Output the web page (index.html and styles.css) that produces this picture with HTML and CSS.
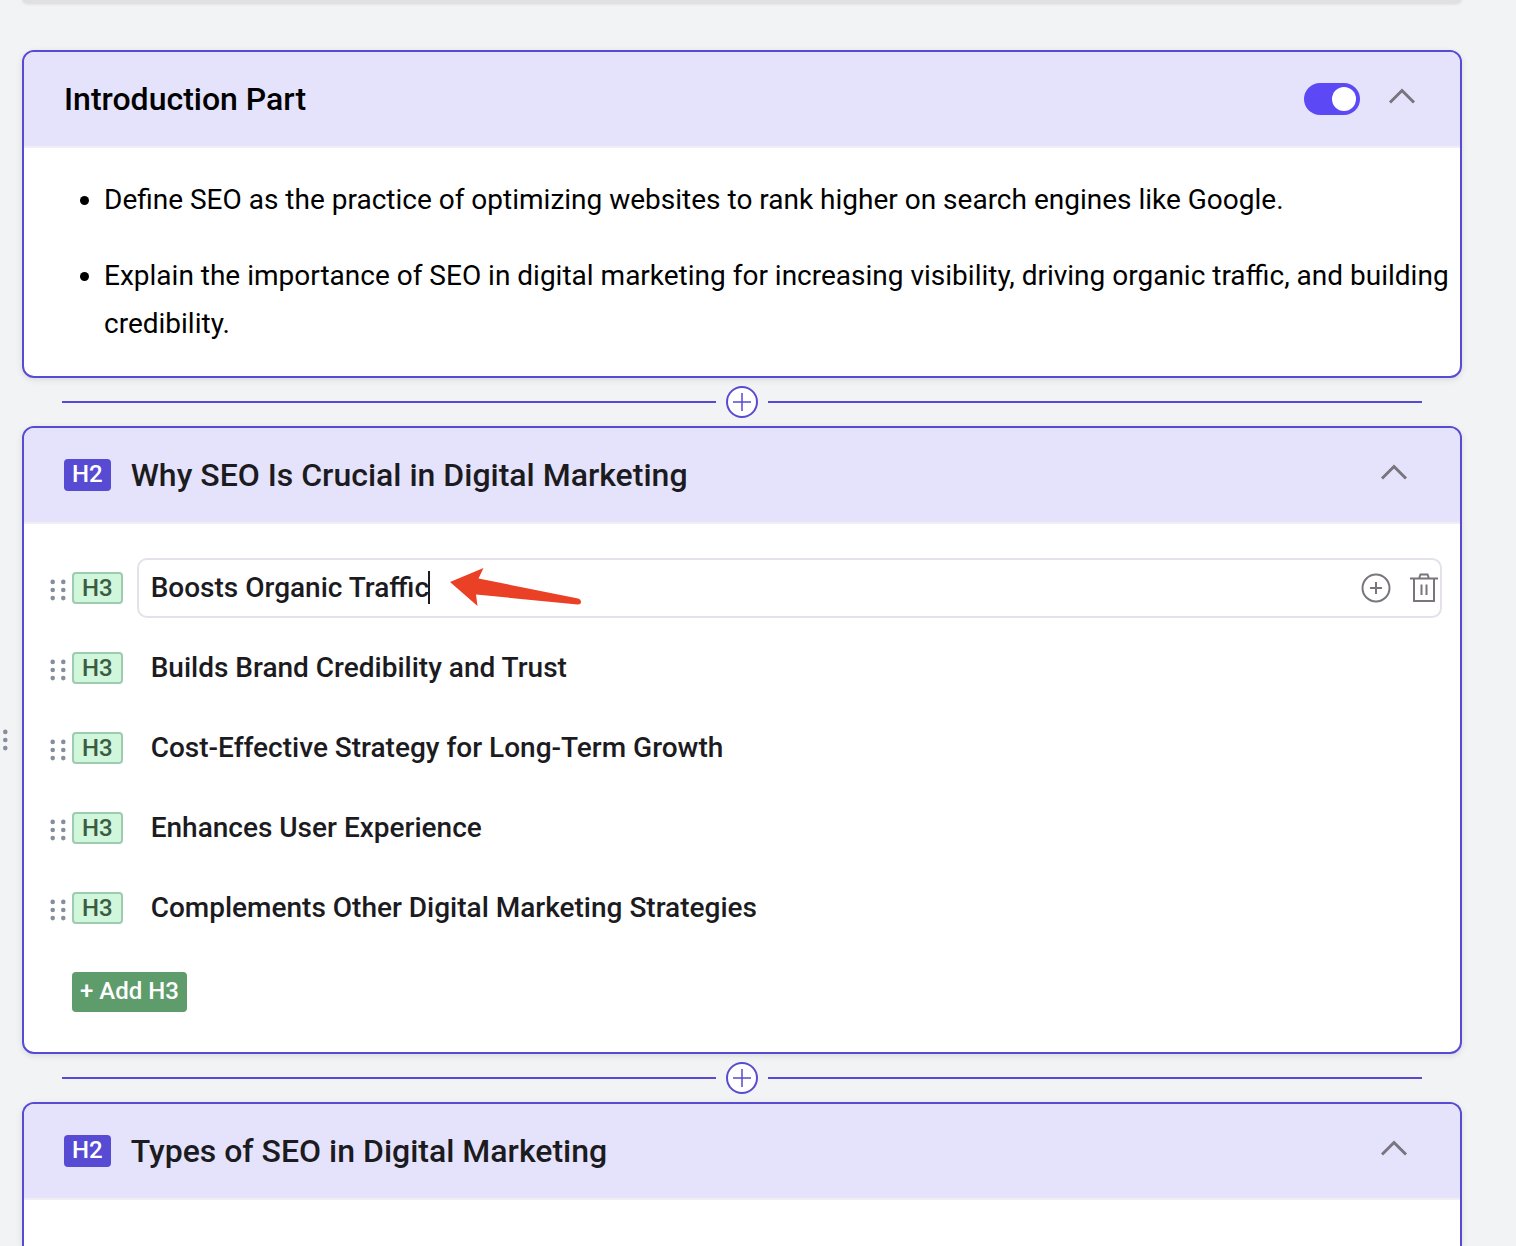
FILE: index.html
```html
<!DOCTYPE html>
<html lang="en">
<head>
<meta charset="utf-8">
<meta name="viewport" content="width=device-width, initial-scale=1">
<title>Outline editor</title>
<link rel="stylesheet" href="styles.css">
</head>
<body>
<svg class="sprite" aria-hidden="true">
  <symbol id="chevron" viewBox="0 0 28 18"><path d="M2 15.500 14 3.500 26 15.500" fill="none" stroke="currentColor" stroke-width="3"/></symbol>
  <symbol id="drag" viewBox="0 0 16 22"><g fill="currentColor"><circle cx="2.700" cy="2.900" r="2.300"/><circle cx="13.300" cy="2.900" r="2.300"/><circle cx="2.700" cy="11" r="2.300"/><circle cx="13.300" cy="11" r="2.300"/><circle cx="2.700" cy="19.100" r="2.300"/><circle cx="13.300" cy="19.100" r="2.300"/></g></symbol>
  <symbol id="insert" viewBox="0 0 32 32"><circle cx="16" cy="16" r="15" fill="#fff" stroke="currentColor" stroke-width="2"/><path d="M7 16H25M16 7V25" stroke="currentColor" stroke-width="1.500"/></symbol>
  <symbol id="plus-circle" viewBox="0 0 30 30"><circle cx="15" cy="15" r="13.500" fill="none" stroke="currentColor" stroke-width="2"/><path d="M9 15H21M15 9V21" stroke="currentColor" stroke-width="2"/></symbol>
  <symbol id="trash" viewBox="0 0 28 30"><path d="M0 5.500H28M4 5.500V28H24V5.500M9 5.500 10.500 1.500H17.500L19 5.500M11.500 11.500V22M16.500 11.500V22" fill="none" stroke="currentColor" stroke-width="2"/></symbol>
</svg>

<main class="outline">
  <div class="previous-card"></div>

  <section class="card">
    <header class="card-header">
      <h2 class="card-title intro-title">Introduction Part</h2>
      <input class="toggle" type="checkbox" role="switch" aria-label="Include introduction" checked>
      <button class="icon-button collapse" aria-label="Collapse"><svg class="chevron"><use href="#chevron"/></svg></button>
    </header>
    <ul class="points">
      <li>Define SEO as the practice of optimizing websites to rank higher on search engines like Google.</li>
      <li>Explain the importance of SEO in digital marketing for increasing visibility, driving organic traffic, and building credibility.</li>
    </ul>
  </section>

  <div class="divider"><button class="icon-button" aria-label="Insert section"><svg class="insert"><use href="#insert"/></svg></button></div>

  <section class="card">
    <button class="icon-button card-handle" aria-label="Move section"><svg class="drag"><use href="#drag"/></svg></button>
    <header class="card-header section-header">
      <span class="tag-h2">H2</span>
      <h2 class="card-title">Why SEO Is Crucial in Digital Marketing</h2>
      <button class="icon-button collapse" aria-label="Collapse"><svg class="chevron"><use href="#chevron"/></svg></button>
    </header>
    <div class="card-body">
      <div class="rows">
        <div class="row">
          <button class="icon-button" aria-label="Move heading"><svg class="drag"><use href="#drag"/></svg></button>
          <span class="tag-h3">H3</span>
          <div class="field editing">
            <input class="heading-input" type="text" aria-label="H3 heading" value="Boosts Organic Traffic">
            <span class="caret"></span>
            <div class="actions">
              <button class="icon-button" aria-label="Add heading"><svg class="plus-circle"><use href="#plus-circle"/></svg></button>
              <button class="icon-button" aria-label="Delete heading"><svg class="trash"><use href="#trash"/></svg></button>
            </div>
            <svg class="arrow" viewBox="0 0 132 38" aria-hidden="true"><path d="M0 14 33.500 0 28.500 10.500 128 30.500Q131 31.500 131 34T127.500 36.500L26 26.500 27.500 38Z" fill="#ea4025"/></svg>
          </div>
        </div>
        <div class="row">
          <button class="icon-button" aria-label="Move heading"><svg class="drag"><use href="#drag"/></svg></button>
          <span class="tag-h3">H3</span>
          <div class="field"><input class="heading-input" type="text" aria-label="H3 heading" value="Builds Brand Credibility and Trust"></div>
        </div>
        <div class="row">
          <button class="icon-button" aria-label="Move heading"><svg class="drag"><use href="#drag"/></svg></button>
          <span class="tag-h3">H3</span>
          <div class="field"><input class="heading-input" type="text" aria-label="H3 heading" value="Cost-Effective Strategy for Long-Term Growth"></div>
        </div>
        <div class="row">
          <button class="icon-button" aria-label="Move heading"><svg class="drag"><use href="#drag"/></svg></button>
          <span class="tag-h3">H3</span>
          <div class="field"><input class="heading-input" type="text" aria-label="H3 heading" value="Enhances User Experience"></div>
        </div>
        <div class="row">
          <button class="icon-button" aria-label="Move heading"><svg class="drag"><use href="#drag"/></svg></button>
          <span class="tag-h3">H3</span>
          <div class="field"><input class="heading-input" type="text" aria-label="H3 heading" value="Complements Other Digital Marketing Strategies"></div>
        </div>
      </div>
      <button class="add-button">+ Add H3</button>
    </div>
  </section>

  <div class="divider"><button class="icon-button" aria-label="Insert section"><svg class="insert"><use href="#insert"/></svg></button></div>

  <section class="card card-open">
    <header class="card-header section-header">
      <span class="tag-h2">H2</span>
      <h2 class="card-title">Types of SEO in Digital Marketing</h2>
      <button class="icon-button collapse" aria-label="Collapse"><svg class="chevron"><use href="#chevron"/></svg></button>
    </header>
  </section>
</main>
</body>
</html>
```

FILE: styles.css
```css
* { box-sizing: border-box; }

body {
  margin: 0;
  background: #f1f3f5;
  color: #1c1b1f;
  font-family: Roboto, "Liberation Sans", sans-serif;
  font-size: 28px;
}

.sprite { position: absolute; width: 0; height: 0; }
svg { display: block; flex: none; }

.outline {
  display: flex;
  flex-direction: column;
  min-height: 100vh;
  padding: 0 54px 0 22px;
}

.previous-card {
  height: 3px;
  margin-bottom: 47px;
  border-radius: 0 0 8px 8px / 0 0 3px 3px;
  background: #e2dfe3;
  box-shadow: 0 1px 3px rgba(0, 0, 0, 0.12);
}

.card {
  position: relative;
  border: 2px solid #574bd3;
  border-radius: 12px;
  background: #fff;
  box-shadow: 0 2px 6px rgba(0, 0, 0, 0.1);
}

.card-open {
  flex: 1;
  border-bottom: 0;
  border-radius: 12px 12px 0 0;
}

.card-header {
  display: flex;
  align-items: center;
  height: 96px;
  padding: 0 44px 0 40px;
  border-bottom: 2px solid #f0edf4;
  border-radius: 10px 10px 0 0;
  background: #e5e3fb;
}

.section-header { padding-right: 52px; }

.card-title {
  flex: 1;
  margin: 0;
  font-size: 32px;
  font-weight: 500;
  line-height: 48px;
}

.intro-title { color: #000; }

.icon-button {
  display: block;
  flex: none;
  padding: 0;
  border: 0;
  background: none;
  color: #79747e;
}

.chevron { width: 28px; height: 18px; }
.collapse { margin-bottom: 6px; }
.drag { width: 16px; height: 22px; color: #868e9c; }
.insert { width: 32px; height: 32px; color: #574bd3; }
.plus-circle { width: 30px; height: 30px; }
.trash { width: 28px; height: 30px; }

.toggle {
  appearance: none;
  display: flex;
  align-items: center;
  justify-content: flex-end;
  width: 56px;
  height: 32px;
  margin: 0 28px 0 0;
  padding: 4px;
  border-radius: 16px;
  background: #5c48f5;
}

.toggle::before {
  content: "";
  width: 24px;
  height: 24px;
  border-radius: 50%;
  background: #fff;
}

.toggle:not(:checked) {
  justify-content: flex-start;
  background: #b5b2bd;
}

.points {
  display: grid;
  gap: 28px;
  margin: 0;
  padding: 28px 0 28px 80px;
  color: #000;
  line-height: 48px;
}

.divider {
  display: flex;
  align-items: center;
  gap: 10px;
  height: 48px;
  padding: 0 40px;
}

.divider::before,
.divider::after {
  content: "";
  flex: 1;
  height: 2px;
  background: #574bd3;
}

.card-handle {
  position: absolute;
  top: 50%;
  left: -32px;
  transform: translateY(-50%);
}

.tag-h2,
.tag-h3 {
  flex: none;
  height: 32px;
  border-radius: 4px;
  font-size: 24px;
  font-weight: 500;
}

.tag-h2 {
  margin-right: 20px;
  padding: 0 8px;
  background: #574bd3;
  color: #fff;
  line-height: 30px;
}

.tag-h3 {
  margin: 0 14px 0 6px;
  padding: 0 8px;
  border: 2px solid #9dcbb0;
  background: #d0f6dc;
  color: #3b5c42;
  line-height: 28px;
}

.card-body { padding: 34px 18px 40px 26px; }

.rows {
  display: grid;
  gap: 20px;
}

.row {
  display: flex;
  align-items: center;
}

.row > .icon-button { padding-top: 4px; }

.field {
  position: relative;
  display: flex;
  flex: 1;
  align-items: center;
  height: 60px;
  padding: 0 2px 0 12px;
  border: 2px solid transparent;
  border-radius: 10px;
}

.editing { border-color: #e6e0e9; }

.heading-input {
  flex: 1;
  min-width: 0;
  height: 56px;
  padding: 0 0 2px;
  border: 0;
  outline: 0;
  background: none;
  color: inherit;
  font: inherit;
  font-weight: 500;
}

.editing .heading-input {
  flex: none;
  field-sizing: content;
}

.caret {
  width: 2px;
  height: 33px;
  margin: 0 0 2px -1px;
  background: #1c1b1f;
}

.actions {
  display: flex;
  align-items: center;
  gap: 19px;
  margin-left: auto;
}

.arrow {
  position: absolute;
  top: 8px;
  left: 311px;
  width: 132px;
  height: 38px;
}

.add-button {
  display: block;
  height: 40px;
  margin: 34px 0 0 22px;
  padding: 0 8px 2px;
  border: 0;
  border-radius: 4px;
  background: #5f9c6c;
  color: #fff;
  font: 500 24px/38px Roboto, "Liberation Sans", sans-serif;
}
```
